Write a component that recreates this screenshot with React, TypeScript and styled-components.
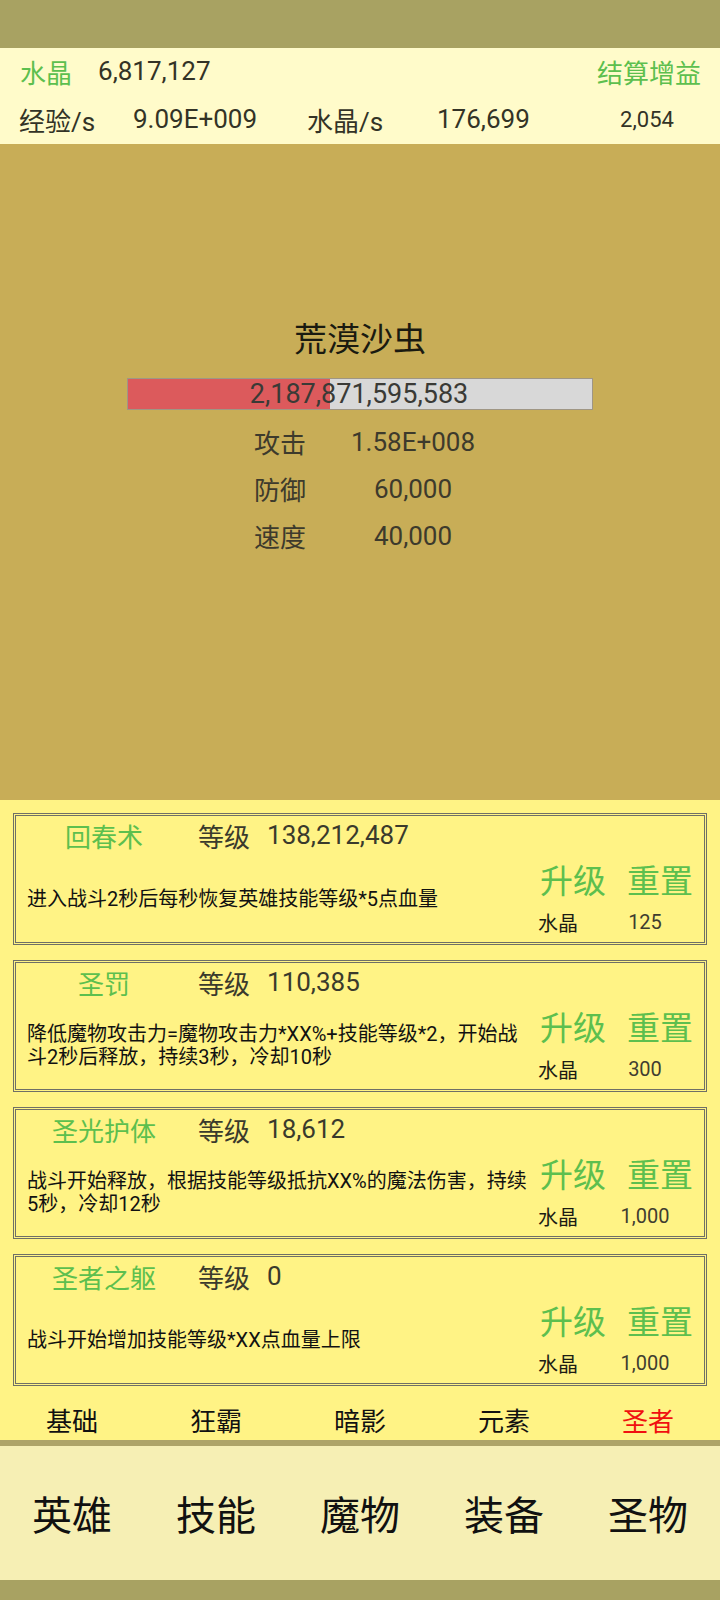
import React from "react";
import styled, { createGlobalStyle } from "styled-components";

const Global = createGlobalStyle`
  html, body { margin: 0; padding: 0; background: #a8a262; }
  body { font-family: Roboto, "Noto Sans CJK SC", sans-serif; }
  * { box-sizing: border-box; }
`;

const Screen = styled.div`
  width: 720px;
  height: 1600px;
  display: flex;
  flex-direction: column;
  background: #a8a262;
  overflow: hidden;
`;

const StatusBar = styled.div`
  height: 48px;
  flex: none;
  background: #a8a262;
`;

const Header = styled.div`
  height: 96px;
  flex: none;
  background: #fffbca;
  display: grid;
  grid-template-rows: 46px 50px;
  color: #333326;
  font-size: 26px;
`;

const TopRow = styled.div`
  display: flex;
  align-items: center;
  padding: 0 19px 0 20px;
  gap: 26px;
`;

const Green = styled.span`
  color: #5dbf4e;
`;

const Spacer = styled.div`
  flex: 1;
`;

const RateRow = styled.div`
  display: grid;
  grid-template-columns: 114px 174px 130px 153px 114px;
  align-items: center;
  padding-left: 19px;
`;

const RateCell = styled.span<{ $small?: boolean; $center?: boolean }>`
  font-size: ${(p) => (p.$small ? "22px" : "26px")};
  text-align: ${(p) => (p.$center ? "center" : "left")};
  white-space: nowrap;
`;

const Battle = styled.div`
  height: 656px;
  flex: none;
  background: #c8ad57;
  display: flex;
  flex-direction: column;
  align-items: center;
  padding-top: 176px;
`;

const MonsterName = styled.div`
  font-size: 33px;
  line-height: 40px;
  color: #1a1a10;
`;

const HpBar = styled.div`
  position: relative;
  margin-top: 18px;
  width: 466px;
  height: 32px;
  background: #d8d8d8;
  border: 1px solid rgba(90, 70, 30, 0.45);
  display: flex;
  align-items: center;
  justify-content: center;
`;

const HpFill = styled.div`
  position: absolute;
  left: 0;
  top: 0;
  bottom: 0;
  background: #dc5a5c;
`;

const HpText = styled.span`
  position: relative;
  font-size: 27px;
  color: #3a3a36;
  margin-right: 2px;
`;

const StatTable = styled.div`
  margin-top: 8px;
  width: 720px;
  padding-left: 254px;
  display: grid;
  grid-template-columns: 52px 214px;
  grid-auto-rows: 47px;
  align-items: center;
  font-size: 26px;
  color: #3d3a2c;
`;

const StatValue = styled.span`
  text-align: center;
`;

const SkillArea = styled.div`
  height: 640px;
  flex: none;
  background: #fff385;
  display: flex;
  flex-direction: column;
`;

const CardList = styled.div`
  display: flex;
  flex-direction: column;
  padding: 13px 13px 0;
  gap: 15px;
`;

const Card = styled.div`
  height: 132px;
  flex: none;
  border: 3px double #6f6f66;
  display: grid;
  grid-template-columns: 522px 1fr;
  grid-template-rows: 40px 1fr;
`;

const CardHead = styled.div`
  grid-column: 1 / 3;
  display: flex;
  align-items: center;
  padding: 0 0 2px 12px;
  font-size: 26px;
  color: #3a3a2c;
`;

const SkillName = styled.span`
  width: 152px;
  text-align: center;
  color: #5dbf4e;
`;

const LevelLabel = styled.span`
  margin-left: 18px;
`;

const LevelValue = styled.span`
  margin-left: 17px;
`;

const Desc = styled.div`
  display: flex;
  align-items: center;
  padding: 0 7px 0 11px;
  font-size: 20px;
  line-height: 23px;
  color: #111;
`;

const Actions = styled.div`
  display: grid;
  grid-template-rows: 46px 40px;
`;

const Buttons = styled.div`
  display: flex;
  align-items: center;
  gap: 21px;
  padding-left: 2px;
`;

const ActionBtn = styled.span`
  font-size: 33px;
  color: #5dbf4e;
`;

const CostRow = styled.div`
  display: grid;
  grid-template-columns: 48px 1fr;
  align-items: center;
  font-size: 20px;
`;

const CostLabel = styled.span`
  color: #1c1c14;
`;

const CostValue = styled.span`
  text-align: center;
  color: #3f3d30;
`;

const Tabs = styled.div`
  height: 54px;
  flex: none;
  display: grid;
  grid-template-columns: repeat(5, 1fr);
  padding-top: 23px;
`;

const Tab = styled.span<{ $active?: boolean }>`
  text-align: center;
  font-size: 26px;
  line-height: 26px;
  color: ${(p) => (p.$active ? "#f01010" : "#111")};
`;

const Divider = styled.div`
  height: 6px;
  flex: none;
  background: #aea468;
`;

const Nav = styled.div`
  height: 134px;
  flex: none;
  background: #f6efb4;
  display: grid;
  grid-template-columns: repeat(5, 1fr);
  align-items: center;
`;

const NavItem = styled.span`
  text-align: center;
  font-size: 40px;
  color: #111;
`;

const BottomBar = styled.div`
  flex: 1;
  background: #a8a262;
`;

const skills = [
  { name: "回春术", level: "138,212,487", desc: "进入战斗2秒后每秒恢复英雄技能等级*5点血量", cost: "125" },
  { name: "圣罚", level: "110,385", desc: "降低魔物攻击力=魔物攻击力*XX%+技能等级*2，开始战斗2秒后释放，持续3秒，冷却10秒", cost: "300" },
  { name: "圣光护体", level: "18,612", desc: "战斗开始释放，根据技能等级抵抗XX%的魔法伤害，持续5秒，冷却12秒", cost: "1,000" },
  { name: "圣者之躯", level: "0", desc: "战斗开始增加技能等级*XX点血量上限", cost: "1,000" },
];

const stats = [
  ["攻击", "1.58E+008"],
  ["防御", "60,000"],
  ["速度", "40,000"],
];

export default function App() {
  return (
    <Screen>
      <Global />
      <StatusBar />
      <Header>
        <TopRow>
          <Green>水晶</Green>
          <span>6,817,127</span>
          <Spacer />
          <Green>结算增益</Green>
        </TopRow>
        <RateRow>
          <RateCell>经验/s</RateCell>
          <RateCell>9.09E+009</RateCell>
          <RateCell>水晶/s</RateCell>
          <RateCell>176,699</RateCell>
          <RateCell $small $center>2,054</RateCell>
        </RateRow>
      </Header>
      <Battle>
        <MonsterName>荒漠沙虫</MonsterName>
        <HpBar>
          <HpFill style={{ width: "43.6%" }} />
          <HpText>2,187,871,595,583</HpText>
        </HpBar>
        <StatTable>
          {stats.map(([k, v]) => (
            <React.Fragment key={k}>
              <span>{k}</span>
              <StatValue>{v}</StatValue>
            </React.Fragment>
          ))}
        </StatTable>
      </Battle>
      <SkillArea>
        <CardList>
          {skills.map((s) => (
            <Card key={s.name}>
              <CardHead>
                <SkillName>{s.name}</SkillName>
                <LevelLabel>等级</LevelLabel>
                <LevelValue>{s.level}</LevelValue>
              </CardHead>
              <Desc>{s.desc}</Desc>
              <Actions>
                <Buttons>
                  <ActionBtn>升级</ActionBtn>
                  <ActionBtn>重置</ActionBtn>
                </Buttons>
                <CostRow>
                  <CostLabel>水晶</CostLabel>
                  <CostValue>{s.cost}</CostValue>
                </CostRow>
              </Actions>
            </Card>
          ))}
        </CardList>
        <Tabs>
          <Tab>基础</Tab>
          <Tab>狂霸</Tab>
          <Tab>暗影</Tab>
          <Tab>元素</Tab>
          <Tab $active>圣者</Tab>
        </Tabs>
      </SkillArea>
      <Divider />
      <Nav>
        <NavItem>英雄</NavItem>
        <NavItem>技能</NavItem>
        <NavItem>魔物</NavItem>
        <NavItem>装备</NavItem>
        <NavItem>圣物</NavItem>
      </Nav>
      <BottomBar />
    </Screen>
  );
}
